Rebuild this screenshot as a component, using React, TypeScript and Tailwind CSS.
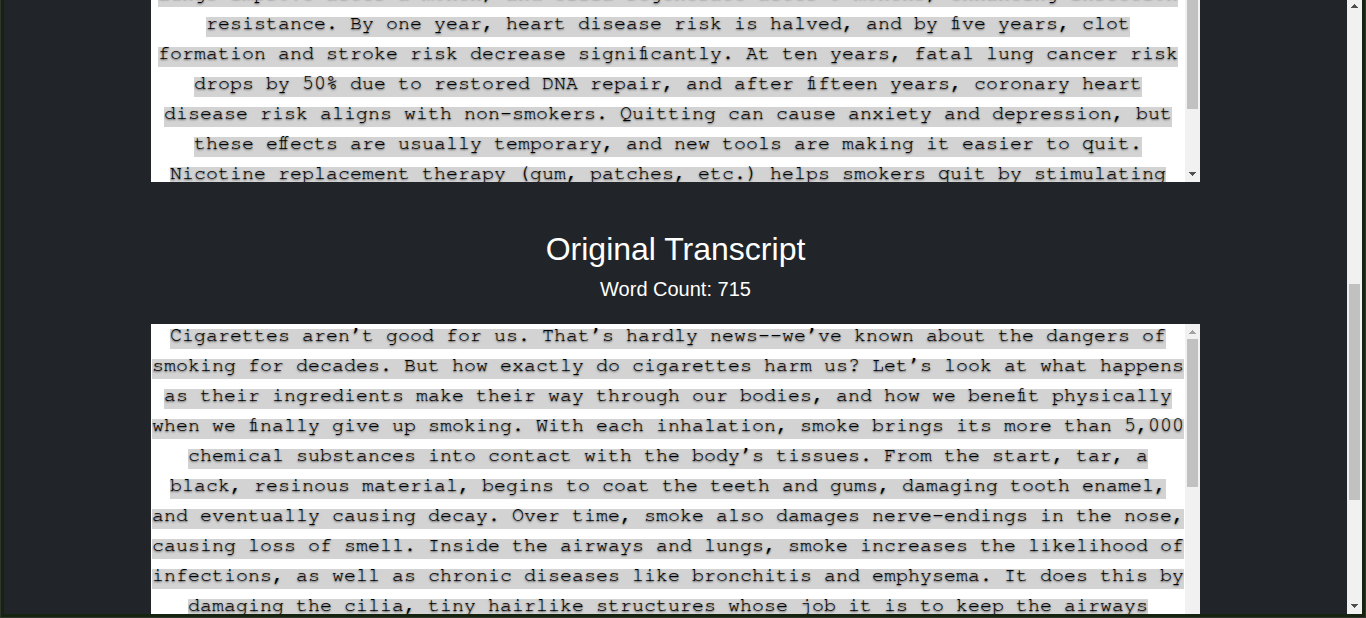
import React from "react";

const summaryLines = [
  "Lungs improve after a month, and cilia regenerate after 9 months, enhancing infection",
  "resistance. By one year, heart disease risk is halved, and by ﬁve years, clot",
  "formation and stroke risk decrease signiﬁcantly. At ten years, fatal lung cancer risk",
  "drops by 50% due to restored DNA repair, and after ﬁfteen years, coronary heart",
  "disease risk aligns with non-smokers. Quitting can cause anxiety and depression, but",
  "these eﬀects are usually temporary, and new tools are making it easier to quit.",
  "Nicotine replacement therapy (gum, patches, etc.) helps smokers quit by stimulating",
];

const transcriptLines = [
  "Cigarettes aren’t good for us. That’s hardly news--we’ve known about the dangers of",
  "smoking for decades. But how exactly do cigarettes harm us? Let’s look at what happens",
  "as their ingredients make their way through our bodies, and how we beneﬁt physically",
  "when we ﬁnally give up smoking. With each inhalation, smoke brings its more than 5,000",
  "chemical substances into contact with the body’s tissues. From the start, tar, a",
  "black, resinous material, begins to coat the teeth and gums, damaging tooth enamel,",
  "and eventually causing decay. Over time, smoke also damages nerve-endings in the nose,",
  "causing loss of smell. Inside the airways and lungs, smoke increases the likelihood of",
  "infections, as well as chronic diseases like bronchitis and emphysema. It does this by",
  "damaging the cilia, tiny hairlike structures whose job it is to keep the airways",
];

function Arrow({ down = false, muted = false }: { down?: boolean; muted?: boolean }) {
  return (
    <svg
      viewBox="0 0 15 15"
      className={`block h-[15px] w-[15px] shrink-0 ${muted ? "fill-[#a3a3a3]" : "fill-[#505050]"}`}
      shapeRendering="crispEdges"
      aria-hidden="true"
    >
      {down ? (
        <path d="M4 5h7v1h-1v1h-1v1h-1v1h-1v-1h-1v-1h-1v-1h-1z" />
      ) : muted ? (
        <path d="M7 6h1v1h1v1h1v1h1v1h-7v-1h1v-1h1v-1h1z" />
      ) : (
        <path d="M7 4h1v1h1v1h1v1h1v1h-7v-1h1v-1h1v-1h1z" />
      )}
    </svg>
  );
}

function Lines({ lines }: { lines: string[] }) {
  return (
    <div className="flex min-w-0 flex-1 flex-col items-center gap-[10px] bg-white">
      {lines.map((line) => (
        <p
          key={line}
          className="h-5 shrink-0 whitespace-pre bg-[#d3d3d3] font-['FreeMono','Liberation_Mono','Courier_New',monospace] text-[20px] leading-3 text-black [text-shadow:0_1px_2px_#000000b3]"
        >
          {line}
        </p>
      ))}
    </div>
  );
}

export default function App() {
  return (
    <div className="h-screen overflow-hidden border-x border-b border-[#30352d] bg-[#14240f] px-[3px] pb-[3px] font-['Liberation_Sans',Arial,sans-serif]">
      <div className="flex h-full bg-[#212529]">
        <main className="flex min-w-0 flex-1 flex-col px-[147px] text-white">
          <section aria-label="Summary" className="flex h-[182px] shrink-0 flex-col justify-start overflow-hidden bg-white">
            <div className="-mt-[13px] flex h-[195px] shrink-0">
              <Lines lines={summaryLines} />
              <div className="flex w-[15px] flex-col bg-[#f1f1f1]">
                <div className="mx-[2px] h-[122px] bg-[#c1c1c1]" />
                <div className="mt-auto">
                  <Arrow down />
                </div>
              </div>
            </div>
          </section>

          <header className="shrink-0 pt-12 pb-5 text-center">
            <h1 className="text-[32px] leading-[38px]">Original Transcript</h1>
            <h2 className="mt-2 pb-[2px] text-[20px] leading-[26px]">Word Count: 715</h2>
          </header>

          <section aria-label="Original transcript" className="flex min-h-0 flex-1 overflow-hidden bg-white">
            <div className="flex min-w-0 flex-1 pt-[5px]">
              <Lines lines={transcriptLines} />
            </div>
            <div className="flex w-[15px] flex-col bg-[#f1f1f1]">
              <Arrow muted />
              <div className="mx-[2px] h-[148px] bg-[#c1c1c1]" />
            </div>
          </section>
        </main>

        <div className="flex w-[15px] flex-col bg-[#f1f1f1]">
          <div className="h-[284px] shrink-0">
            <Arrow />
          </div>
          <div className="mx-[2px] h-[216px] shrink-0 bg-[#c1c1c1]" />
          <div className="mt-auto">
            <Arrow down />
          </div>
        </div>
      </div>
    </div>
  );
}
